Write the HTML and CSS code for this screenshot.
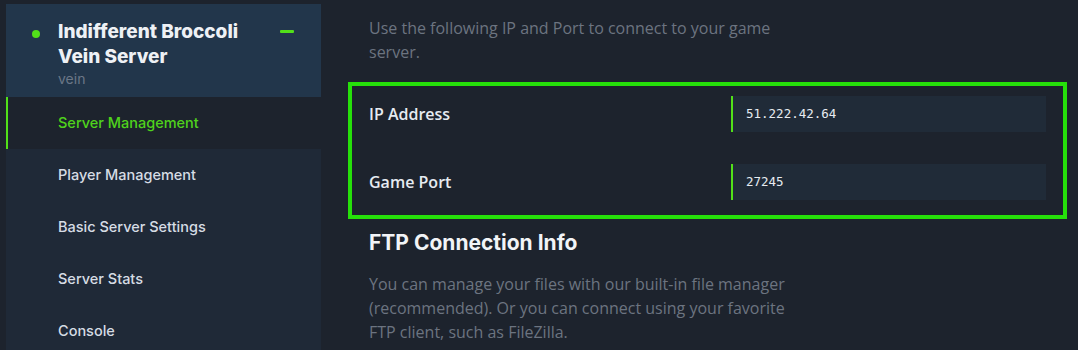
FILE: index.html
```html
<!DOCTYPE html>
<html lang="en">
  <head>
    <meta charset="UTF-8" />
    <meta name="viewport" content="width=device-width, initial-scale=1.0" />
    <title>Server Management</title>
    <link rel="stylesheet" href="styles.css">
  </head>
  <body>
    <div id="page">
      <!-- left side menu -->
      <div id="side">
        <div class="server">
          <span class="dot"></span>
          <div class="server-name">
            <div class="title">Indifferent Broccoli Vein Server</div>
            <div class="game">vein</div>
          </div>
          <span class="minus"></span>
        </div>
        <div class="menu">
          <div class="item active">Server Management</div>
          <div class="item">Player Management</div>
          <div class="item">Basic Server Settings</div>
          <div class="item">Server Stats</div>
          <div class="item">Console</div>
        </div>
      </div>

      <!-- connection info -->
      <div id="main">
        <p class="desc">Use the following IP and Port to connect to your game server.</p>
        <div class="conn">
          <div class="row">
            <div class="label">IP Address</div>
            <div class="value">51.222.42.64</div>
          </div>
          <div class="row">
            <div class="label">Game Port</div>
            <div class="value">27245</div>
          </div>
        </div>
        <h2 class="head">FTP Connection Info</h2>
        <p class="desc">You can manage your files with our built-in file manager (recommended). Or you can connect using your favorite FTP client, such as FileZilla.</p>
      </div>
    </div>
  </body>
</html>
```

FILE: styles.css
```css
body {
  margin: 0;
  background: #1d232d;
  font-family: "Open Sans", "Liberation Sans", sans-serif;
  height: 350px;
  overflow: hidden;
}
#page {
  display: flex;
  align-items: flex-start;
  padding: 4px 0 0 6px;
}
#side {
  width: 315px;
  font-family: Inter, "Liberation Sans", sans-serif;
}
.server {
  display: flex;
  align-items: flex-start;
  background: #22364b;
  padding: 15px 27px 8px 26px;
}
.dot {
  width: 8px;
  height: 8px;
  border-radius: 50%;
  background: #52e019;
  margin-top: 11px;
  flex: none;
}
.server-name {
  flex: 1;
  margin-left: 18px;
}
.title {
  color: #eef1f5;
  font-size: 19px;
  font-weight: 800;
  line-height: 25px;
  width: 200px;
}
.game {
  color: #6b7787;
  font-size: 14px;
  line-height: 20px;
}
.minus {
  width: 14px;
  height: 3px;
  border-radius: 1px;
  background: #52e019;
  margin-top: 11px;
  flex: none;
}
.menu {
  background: #1f2937;
}
.item {
  height: 52px;
  line-height: 52px;
  padding-left: 50px;
  border-left: 2px solid transparent;
  color: #d6dce4;
  font-size: 14.5px;
  font-weight: 500;
}
.item.active {
  background: #1d232d;
  border-left-color: #52e019;
  color: #4fd21c;
}
#main {
  margin-left: 27px;
  width: 719px;
  padding-top: 12px;
}
.desc {
  margin: 0 0 0 21px;
  max-width: 430px;
  color: #6c7480;
  font-size: 16px;
  line-height: 24px;
}
.conn {
  margin-top: 18px;
  border: solid 4px #26e00a;
  padding: 10px 17px 15px 17px;
  display: flex;
  flex-direction: column;
  gap: 32px;
}
.row {
  display: flex;
  align-items: center;
}
.label {
  flex: 1;
  color: #e6ebf1;
  font-size: 16px;
  font-weight: 600;
}
.value {
  width: 300px;
  height: 36px;
  line-height: 36px;
  background: #202b38;
  border-left: solid 2px #52e019;
  padding-left: 13px;
  color: #e6ebf1;
  font-family: "DejaVu Sans Mono", "Liberation Mono", monospace;
  font-size: 12.5px;
}
.head {
  margin: 10px 0 15px 21px;
  color: #f2f4f7;
  font-family: Inter, "Liberation Sans", sans-serif;
  font-size: 21px;
  font-weight: 700;
  line-height: 28px;
}
```
